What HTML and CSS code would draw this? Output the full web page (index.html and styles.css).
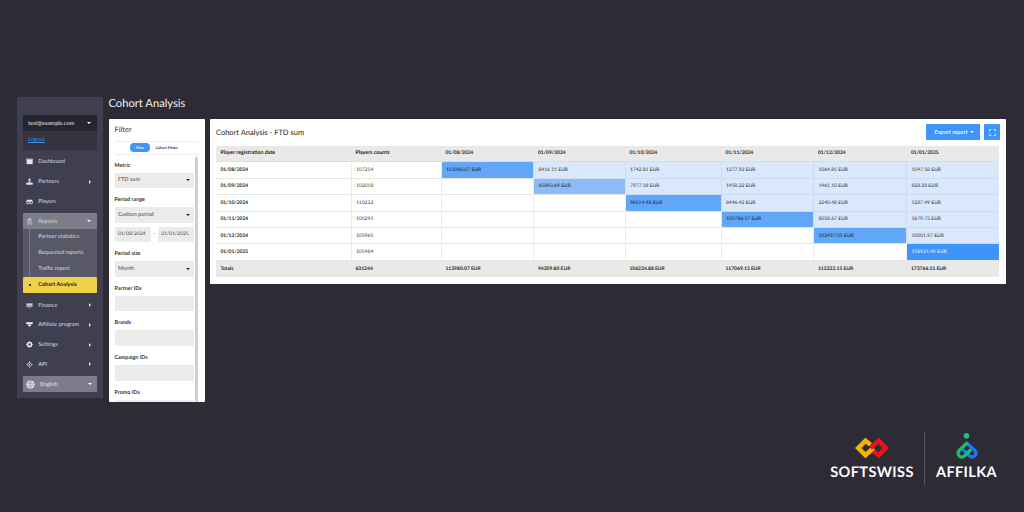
FILE: index.html
```html
<!DOCTYPE html>
<html lang="en">
<head>
<meta charset="utf-8">
<title>Cohort Analysis</title>
<link rel="stylesheet" href="styles.css">
</head>
<body>
<div class="app">
  <aside class="sidebar">
    <div class="user">
      <div class="user-head"><span>test@example.com</span><i class="caret-down caret-white"></i></div>
      <div class="user-foot"><a class="logout">Logout</a></div>
    </div>
    <nav class="nav">
      <div class="nav-item"><svg class="ico" viewBox="0 0 12 12"><path d="M1 2h10.500v8.500H1z" fill="#e6e6ea"/><path d="M0 1h12v1.500H0z" fill="#b9b9c2"/></svg><span>Dashboard</span></div>
      <div class="nav-item"><svg class="ico" viewBox="0 0 12 12"><circle cx="6" cy="2.800" r="2" fill="#e6e6ea"/><path d="M4 5.500h4v2.500H4z" fill="#c9c9d0"/><path d="M.5 8h11v3.500H.5z" fill="#e6e6ea"/></svg><span>Partners</span><i class="caret-right"></i></div>
      <div class="nav-item"><svg class="ico" viewBox="0 0 12 12"><circle cx="3.200" cy="7.500" r="2.500" fill="none" stroke="#e6e6ea" stroke-width="1.500"/><circle cx="8.800" cy="7.500" r="2.500" fill="none" stroke="#e6e6ea" stroke-width="1.500"/><path d="M1.500 3h9l.7 3H.8z" fill="#e6e6ea"/></svg><span>Players</span></div>
      <div class="nav-group">
        <div class="nav-item nav-item-open"><svg class="ico" viewBox="0 0 12 12"><path d="M2 1.500h8V11.500H2z" fill="#a9a8b2"/><path d="M4 .5h4v2H4z" fill="#d5d5da"/><path d="M3.500 5h5M3.500 7h5M3.500 9h5" stroke="#8d8c98" stroke-width=".7"/></svg><span>Reports</span><i class="caret-down caret-white"></i></div>
        <div class="subnav">
          <div class="sub-item">Partner statistics</div>
          <div class="sub-item">Requested reports</div>
          <div class="sub-item">Traffic report</div>
        </div>
        <div class="sub-active"><i class="dot"></i><span>Cohort Analysis</span></div>
      </div>
      <div class="nav-item"><svg class="ico" viewBox="0 0 12 12"><path d="M.5 2h11v6.500H.5z" fill="#a9a8b2"/><path d="M2 4h8v1.200H2z" fill="#e6e6ea"/><path d="M3 9.500h6v1H3z" fill="#a9a8b2"/></svg><span>Finance</span><i class="caret-right"></i></div>
      <div class="nav-item"><svg class="ico" viewBox="0 0 12 12"><path d="M0 2h12L11 5.500H1zM2.500 6.500h7L7.800 8.500H4.200zM4.800 9.200h2.400L6 10.500z" fill="#eeeef1"/></svg><span>Affiliate program</span><i class="caret-right"></i></div>
      <div class="nav-item"><svg class="ico" viewBox="0 0 12 12"><circle cx="6" cy="6" r="3.400" fill="none" stroke="#f0f0f3" stroke-width="2.600"/><path d="M6 .3v11.400M.3 6h11.400M2 2l8 8M10 2l-8 8" stroke="#f0f0f3" stroke-width="1.300" stroke-dasharray="1.500 8.400"/></svg><span>Settings</span><i class="caret-right"></i></div>
      <div class="nav-item"><svg class="ico" viewBox="0 0 12 12"><circle cx="6" cy="6" r="3.300" fill="none" stroke="#e6e6ea" stroke-width="1.100"/><circle cx="6" cy="6" r="1.100" fill="#e6e6ea"/><path d="M6 .5v2.200M6 9.300v2.200M.5 6h2.200M9.300 6h2.200" stroke="#e6e6ea" stroke-width="1.100"/></svg><span>API</span><i class="caret-right"></i></div>
    </nav>
    <div class="lang"><svg class="globe" viewBox="0 0 12 12"><circle cx="6" cy="6" r="5.500" fill="#e9e9ed"/><path d="M.5 4.200h11M.5 7.800h11M6 .5v11M6 .5C2.800 3.500 2.800 8.500 6 11.500M6 .5c3.200 3 3.200 8 0 11" fill="none" stroke="#7d7c89" stroke-width=".6"/></svg><span>English</span><i class="caret-down caret-white"></i></div>
  </aside>

  <div class="workspace">
    <h1 class="page-title">Cohort Analysis</h1>
    <div class="panels">
      <section class="filter">
        <h2 class="filter-title">Filter</h2>
        <div class="tabs"><span class="tab tab-on">Filter</span><span class="tab">Cohort Filters</span></div>
        <div class="filter-body">
          <div class="fields">
            <div class="field"><label>Metric</label><div class="control"><span>FTD sum</span><i class="caret-down"></i></div></div>
            <div class="field"><label>Period range</label><div class="control"><span>Custom period</span><i class="caret-down"></i></div>
              <div class="dates"><div class="control">01/08/2024</div><span class="dash">–</span><div class="control">31/01/2025</div></div></div>
            <div class="field"><label>Period size</label><div class="control"><span>Month</span><i class="caret-down"></i></div></div>
            <div class="field"><label>Partner IDs</label><div class="control"></div></div>
            <div class="field"><label>Brands</label><div class="control"></div></div>
            <div class="field"><label>Campaign IDs</label><div class="control"></div></div>
            <div class="field"><label>Promo IDs</label><div class="control"></div></div>
          </div>
          <div class="scrollbar"></div>
        </div>
      </section>

      <section class="report">
        <div class="report-head">
          <h2 class="report-title">Cohort Analysis - FTD sum</h2>
          <div class="actions">
            <button class="btn">Export report<i class="caret-down caret-white"></i></button>
            <button class="btn btn-icon"><svg viewBox="0 0 12 12" class="expand"><path d="M1 4V1h3M8 1h3v3M11 8v3H8M4 11H1V8" fill="none" stroke="#fff" stroke-width="1.400"/></svg></button>
          </div>
        </div>
        <table class="cohort">
          <colgroup><col class="c1"><col class="c2"><col class="c3"><col class="c4"><col class="c5"><col class="c6"><col class="c7"><col class="c8"></colgroup>
          <thead><tr><th>Player registration date</th><th>Players counts</th><th>01/08/2024</th><th>01/09/2024</th><th>01/10/2024</th><th>01/11/2024</th><th>01/12/2024</th><th>01/01/2025</th></tr></thead>
          <tbody>
            <tr><td class="date">01/08/2024</td><td>107254</td><td class="strong">113980.07 EUR</td><td class="light">8416.11 EUR</td><td class="light">1742.81 EUR</td><td class="light">1377.93 EUR</td><td class="light">1064.85 EUR</td><td class="light">1047.58 EUR</td></tr>
            <tr><td class="date">01/09/2024</td><td>102018</td><td></td><td class="mid">85893.69 EUR</td><td class="light">7977.58 EUR</td><td class="light">1458.22 EUR</td><td class="light">1461.10 EUR</td><td class="light">828.28 EUR</td></tr>
            <tr><td class="date">01/10/2024</td><td>110232</td><td></td><td></td><td class="strong">96514.48 EUR</td><td class="light">8446.42 EUR</td><td class="light">2240.48 EUR</td><td class="light">1287.49 EUR</td></tr>
            <tr><td class="date">01/11/2024</td><td>100291</td><td></td><td></td><td></td><td class="strong">105786.57 EUR</td><td class="light">8058.67 EUR</td><td class="light">1679.73 EUR</td></tr>
            <tr><td class="date">01/12/2024</td><td>105965</td><td></td><td></td><td></td><td></td><td class="strong">102497.05 EUR</td><td class="light">10001.97 EUR</td></tr>
            <tr><td class="date">01/01/2025</td><td>105484</td><td></td><td></td><td></td><td></td><td></td><td class="top">158921.49 EUR</td></tr>
          </tbody>
          <tfoot><tr><td>Totals</td><td>631244</td><td>113980.07 EUR</td><td>94309.80 EUR</td><td>106234.88 EUR</td><td>117069.15 EUR</td><td>115322.15 EUR</td><td>173766.51 EUR</td></tr></tfoot>
        </table>
      </section>
    </div>
  </div>
</div>

<footer class="brand">
  <div class="brand-item brand-soft">
    <svg class="logo-soft" viewBox="0 0 34 20"><path d="M15.500 6.800 10.500 2.800 3.200 10l7.300 7.200L18.500 10" fill="none" stroke="#f5b400" stroke-width="4.600"/><path d="M18.500 13.200 23.500 17.200 30.800 10 23.500 2.800 15.500 10" fill="none" stroke="#e8141c" stroke-width="4.600"/></svg>
    <span class="brand-name">SOFTSWISS</span>
  </div>
  <div class="brand-rule"></div>
  <div class="brand-item brand-aff">
    <svg class="logo-aff" viewBox="0 0 22 26"><circle cx="10.500" cy="2.800" r="2.800" fill="#1fc46f"/><path d="M10 9.500 18.800 17.500a3.800 3.800 0 0 1-5.400 5.400L7 16.500" fill="none" stroke="#1e78f0" stroke-width="3.400"/><path d="M11.500 9.500 3.200 17.500a3.800 3.800 0 0 0 5.400 5.400L15 16.500" fill="none" stroke="#19c06d" stroke-width="3.400"/></svg>
    <span class="brand-name">AFFILKA</span>
  </div>
</footer>
</body>
</html>
```

FILE: styles.css
```css
* { box-sizing: border-box; }
html, body { margin: 0; height: 512px; overflow: hidden; }
body {
  background: #2c2b36;
  font-family: Lato, "Open Sans", sans-serif;
  font-size: 5px;
  color: #222;
  padding: 97px 0 0 17px;
  position: relative;
  text-rendering: geometricPrecision;
}
i { display: block; font-style: normal; }
h1, h2 { margin: 0; font-weight: 400; }

.app { display: flex; align-items: flex-start; height: 305px; }

/* carets */
.caret-down { width: 0; height: 0; border-left: 2px solid transparent; border-right: 2px solid transparent; border-top: 2px solid #222; margin-left: auto; }
.caret-white { border-top-color: #fff; }
.caret-right { width: 0; height: 0; border-top: 2px solid transparent; border-bottom: 2px solid transparent; border-left: 2px solid #e6e6ea; margin-left: auto; margin-right: 6px; }

/* sidebar */
.sidebar { width: 86px; height: 301px; background: #403f50; padding: 18px 6px 0; color: #e4e4e9; flex: none; }
.user { height: 35px; background: #343340; border-radius: 1px; margin-bottom: 2px; }
.user-head { height: 16px; background: #252430; color: #e8e8ec; display: flex; align-items: center; padding: 0 6px 0 5px; font-size: 5.600px; }
.user-foot { height: 19px; padding: 3px 5px 0; }
.logout { color: #3f8ee8; text-decoration: underline; font-size: 5.600px; display: block; line-height: 12px; }

.nav { display: flex; flex-direction: column; }
.nav-item { display: flex; align-items: center; height: 19.800px; font-size: 5.600px; padding: 0 0 0 3.300px; color: #dcdce2; }
.nav-item .ico { width: 7px; height: 7px; margin-right: 5px; flex: none; }
.nav-group { display: flex; flex-direction: column; background: #595866; border-radius: 1px; margin: 2px 0 2px; }
.nav-item-open { background: #7d7c89; height: 15.500px; border-radius: 1px; padding-right: 6px; }
.subnav { margin-left: 6.300px; border-left: 1px solid #7a7986; }
.sub-item { height: 16.100px; line-height: 16.100px; padding-left: 8px; color: #dcdce2; font-size: 5.600px; }
.sub-active { height: 16px; background: #efd14a; color: #1d1c24; display: flex; align-items: center; font-size: 5.500px; font-weight: 700; padding-left: 6px; border-radius: 1px; }
.dot { width: 1.500px; height: 1.500px; background: #1d1c24; border-radius: 50%; margin-right: 7.800px; }
.lang { height: 16px; background: #7d7c89; border-radius: 1px; display: flex; align-items: center; padding: 0 5px 0 3.300px; color: #e8e8ec; font-size: 5.600px; margin-top: 2px; }
.globe { width: 9px; height: 9px; margin-right: 5px; }

/* workspace */
.workspace { margin-left: 5.500px; flex: none; width: 897px; }
.page-title { color: #f0f0f3; font-size: 11.200px; line-height: 14px; height: 21.500px; }
.panels { display: flex; align-items: flex-start; gap: 5.500px; }

/* filter panel */
.filter { width: 96px; height: 283px; background: #fff; border-radius: 1px; padding: 0 0 0 6px; overflow: hidden; flex: none; }
.filter-title { font-size: 7.500px; color: #333; line-height: 21px; height: 23px; margin-right: 6px; border-bottom: 1px solid #ededed; }
.tabs { display: flex; justify-content: center; align-items: center; gap: 6px; height: 13.500px; border-bottom: 1px solid #ededed; margin-right: 6px; font-size: 3.600px; font-weight: 700; padding-right: 5px; }
.tab { display: block; }
.tab-on { background: #3f94f8; color: #fff; border-radius: 4px; padding: 1.800px 5.500px; }
.filter-body { display: flex; gap: 1px; padding-top: 2px; }
.fields { width: 79.500px; flex: none; padding-top: 4.500px; }
.scrollbar { width: 3px; height: 250px; background: #cfcfcf; flex: none; }
.field { margin-bottom: 8px; }
.field label { display: block; font-size: 5.400px; font-weight: 700; color: #333; line-height: 8px; height: 11px; }
.control { height: 15.600px; background: #ebebeb; border-radius: 1px; display: flex; align-items: center; padding: 0 4px 0 3.500px; font-size: 5.500px; color: #444; }
.dates { display: flex; align-items: center; margin-top: 4px; }
.dates .control { width: 36.500px; flex: none; font-size: 5px; }
.dash { width: 6.500px; text-align: center; color: #444; font-size: 5px; }

/* report panel */
.report { width: 796px; height: 165px; background: #fff; border-radius: 1px; padding: 5.500px 6px 0; flex: none; }
.report-head { display: flex; align-items: center; justify-content: space-between; height: 16px; margin-bottom: 5.500px; }
.report-title { font-size: 7.500px; color: #222; }
.actions { display: flex; gap: 4px; }
.btn { height: 16px; width: 54px; background: #3f94f8; border: 0; border-radius: 1px; color: #e8f2ff; font-family: inherit; font-size: 5.500px; font-weight: 700; display: flex; align-items: center; padding: 0 6px 0 8.500px; }
.btn-icon { width: 16px; padding: 0; justify-content: center; }
.expand { width: 7px; height: 7px; }

.cohort { width: 783px; table-layout: fixed; border-collapse: collapse; font-size: 5px; color: #222; }
.c1 { width: 135px; } .c2 { width: 90px; } .c3 { width: 92.500px; } .c4 { width: 91.500px; } .c5 { width: 96px; } .c6 { width: 92.500px; } .c7 { width: 93px; } .c8 { width: 92.500px; }
.cohort th, .cohort td { height: 16.400px; padding: 0 4.400px; text-align: left; white-space: nowrap; }
.cohort th { background: #e9e9e9; font-size: 5.300px; font-weight: 700; border-bottom: 1px solid #dcdcdc; }
.cohort th:nth-child(n+3) { font-size: 5px; }
.cohort tbody td { border-bottom: 1px solid #e6e6e6; border-left: 1px solid #ececec; color: #333; }
.cohort tbody td:first-child { border-left: 0; }
.cohort tbody td.date { font-weight: 700; color: #222; }
.cohort tfoot td { background: #e9e9e9; font-weight: 700; border-top: 1px solid #d4d4d4; color: #222; }
.cohort tbody td.light { background: #d9e8fd; border-color: #cfdcee; color: #333; }
.cohort tbody td.mid { background: #8cbcf8; color: #1a1a1a; }
.cohort tbody td.strong { background: #62a6f9; color: #1a1a1a; }
.cohort tbody td.top { background: #3f94f8; color: #f2f7ff; }

/* brand */
.brand { position: absolute; left: 830px; top: 432px; height: 53px; display: flex; align-items: stretch; }
.brand-item { display: flex; flex-direction: column; align-items: center; justify-content: flex-end; padding-bottom: 5px; }
.brand-soft { width: 84px; }
.brand-aff { width: 62px; }
.brand-rule { width: 1px; background: #55555f; margin: 0 10.500px 0 10px; }
.brand-name { color: #fff; font-size: 14.500px; font-weight: 700; line-height: 15px; letter-spacing: .4px; white-space: nowrap; }
.logo-soft { width: 34px; height: 20px; margin-bottom: 7px; }
.logo-aff { width: 22px; height: 26px; margin-bottom: 6px; }
```
